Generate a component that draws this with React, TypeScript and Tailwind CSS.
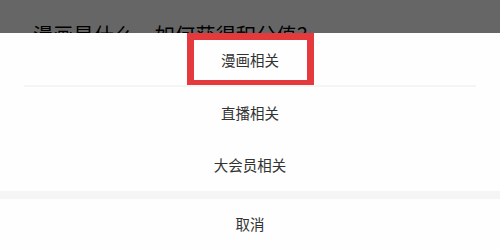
import React from "react"

const options = ["漫画相关", "直播相关", "大会员相关"]

export default function App() {
  return (
    <div className="relative w-[500px] h-[250px] overflow-hidden bg-white font-['Noto_Sans_CJK_SC','Noto_Sans',sans-serif]">
      {/* page behind the sheet */}
      <div className="pt-[25px] pl-[33px] text-[20px] leading-[20px] text-black tracking-[0.3px]">
        漫画是什么，如何获得积分值？
      </div>

      <div className="absolute inset-0 bg-black/60" />

      <div className="absolute left-0 right-0 bottom-0 h-[217px] bg-[#fefefe] flex flex-col">
        <div className="h-[52px] flex items-center justify-center">
          <div className="mt-[1px] w-[127px] h-[54px] border-[7px] border-[#e53a3d] flex items-center justify-center text-[14.5px] text-[#333]">
            {options[0]}
          </div>
        </div>
        <div className="mx-[24px] h-[2px] bg-[#f5f5f5]" />
        <div className="h-[52px] flex items-center justify-center text-[14.5px] text-[#333]">
          {options[1]}
        </div>
        <div className="h-[53px] flex items-center justify-center text-[14.5px] text-[#333]">
          {options[2]}
        </div>
        <div className="h-[8px] bg-[#f5f5f5]" />
        <div className="h-[52px] flex items-center justify-center text-[14.5px] text-[#333]">
          取消
        </div>
      </div>
    </div>
  )
}
